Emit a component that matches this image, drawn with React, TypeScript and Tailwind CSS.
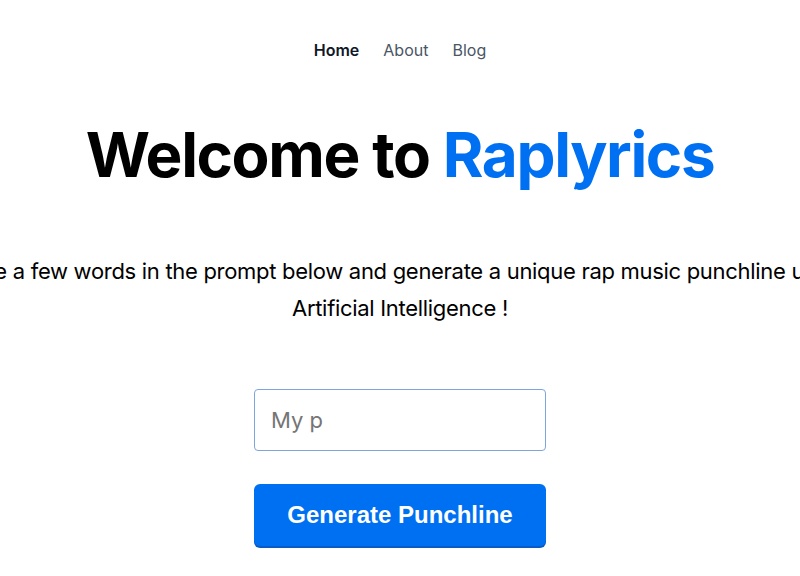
export default function App() {
  return (
    <div className="flex min-h-screen flex-col items-center bg-white font-['Inter',sans-serif] text-black">
      <nav className="mt-[40px] flex items-center gap-6 text-[16px] leading-[20px]">
        <a className="font-semibold text-gray-900" href="#">Home</a>
        <a className="text-gray-600" href="#">About</a>
        <a className="text-gray-600" href="#">Blog</a>
      </nav>

      <h1 className="mt-[58px] whitespace-nowrap text-[62px] font-bold leading-[74px] tracking-[-1.4px]">
        Welcome to <span className="text-[#0070f3]">Raplyrics</span>
      </h1>

      <p className="mt-[61px] whitespace-nowrap text-center text-[22px] leading-[37px] tracking-[-0.3px]">
        Write a few words in the prompt below and generate a unique rap music punchline using
        <br />
        Artificial Intelligence !
      </p>

      <div className="mt-[62px] flex w-[292px] flex-col gap-[33px]">
        <input
          className="h-[62px] w-full rounded-[4px] border border-[#7ea6dc] px-4 text-[22px] text-gray-800 outline-none placeholder:text-[#757575]"
          placeholder="My p"
        />
        <button className="h-[62px] w-full rounded-[6px] bg-[#0070f3] font-['Liberation_Sans',sans-serif] text-[24px] font-bold text-white shadow-[0_2px_0_#0a5bc4]">
          Generate Punchline
        </button>
      </div>
    </div>
  )
}
